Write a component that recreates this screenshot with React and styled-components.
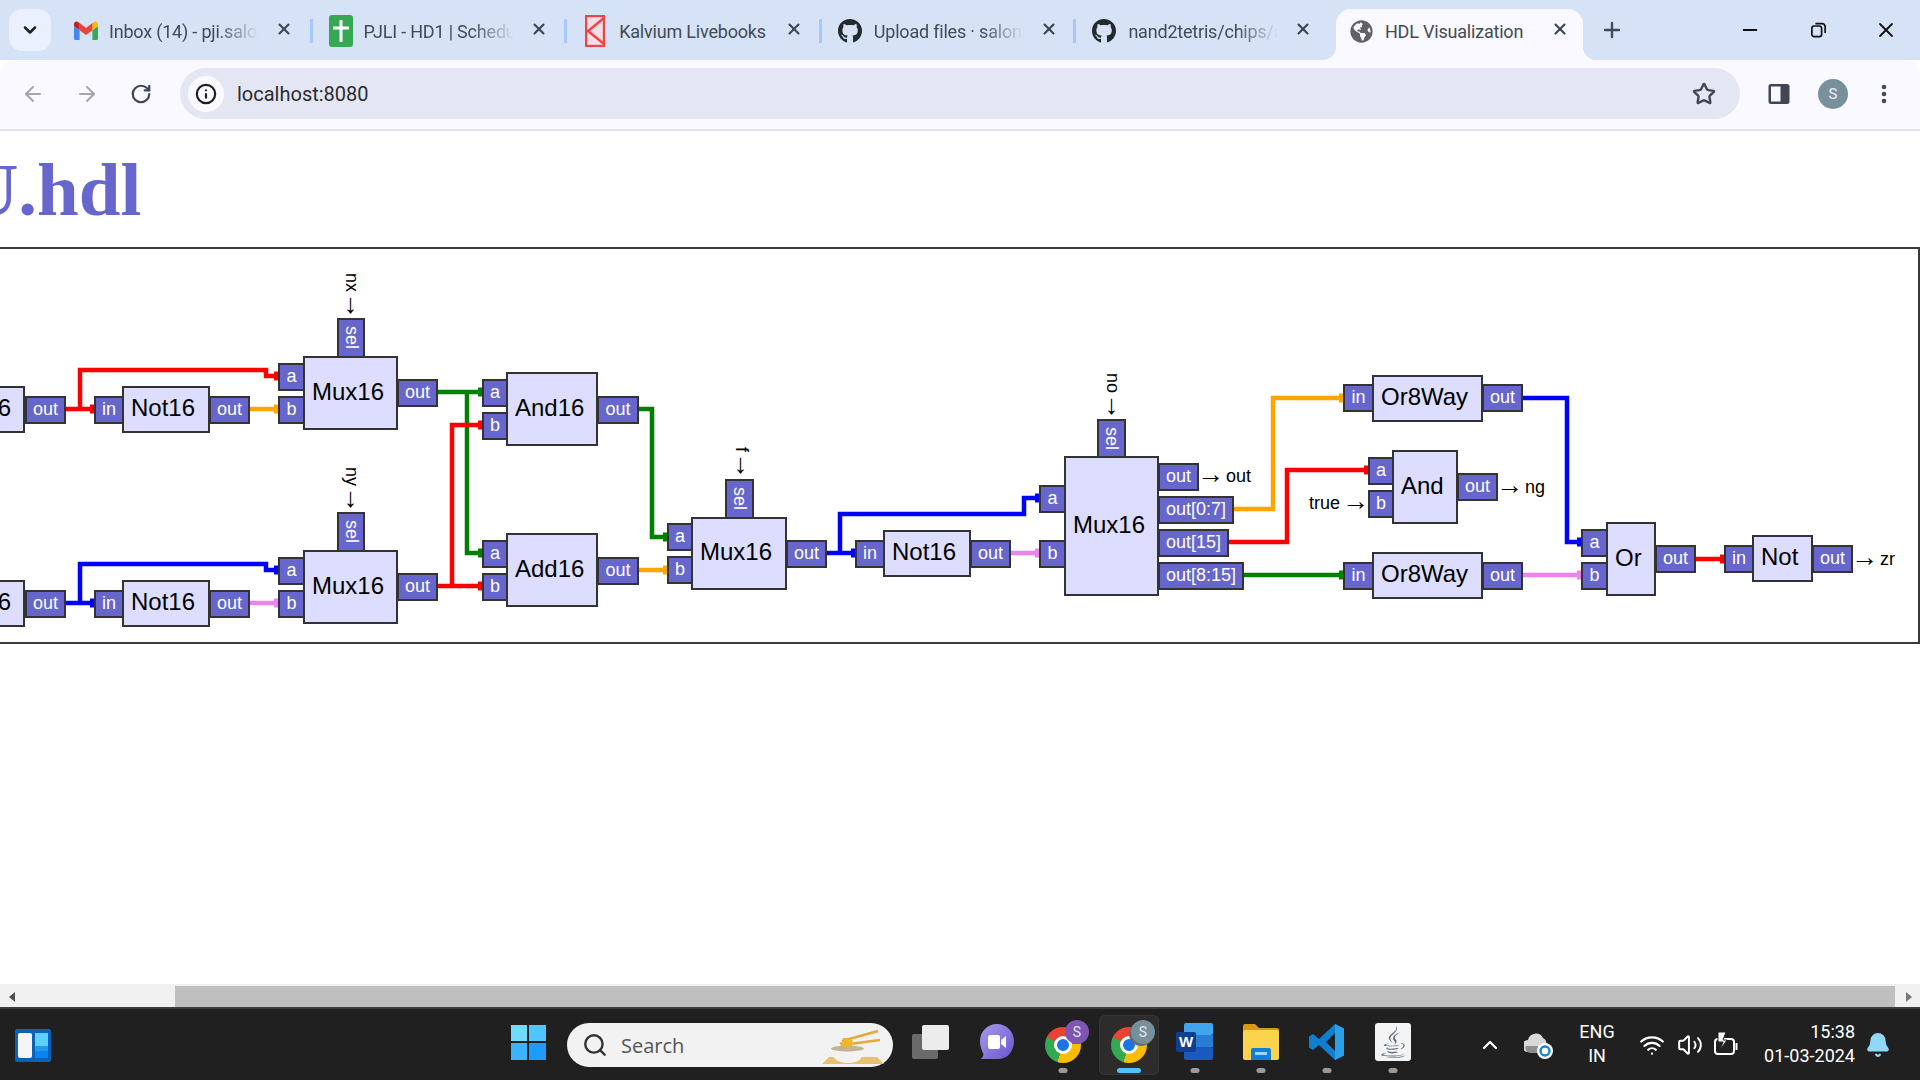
import React from "react";
import styled, { createGlobalStyle } from "styled-components";
import { ArrowLeft, ArrowRight, RotateCw, Star, X, Plus, Minus, ChevronDown, ChevronUp, Search, Wifi, Volume2, Bell, Info, EllipsisVertical } from "lucide-react";
import { FaGithub, FaGlobeAmericas, FaJava } from "react-icons/fa";

const GlobalStyle = createGlobalStyle`
  html, body { margin: 0; padding: 0; height: 100%; overflow: hidden; background: #fff; }
  #root { height: 100%; }
  * { box-sizing: border-box; }
`;

const Screen = styled.div`
  width: 1920px; height: 1080px; display: flex; flex-direction: column;
  font-family: Roboto, "Liberation Sans", sans-serif; overflow: hidden;
`;

/* ---------- browser chrome ---------- */
const TabStrip = styled.div`
  height: 60px; flex: none; background: #d6e3f7; display: flex; align-items: stretch; padding-left: 9px;
`;
const TabSearch = styled.div`
  width: 42px; height: 42px; margin-top: 9px; margin-right: 6px; border-radius: 13px; background: #ebf0fe;
  display: flex; align-items: center; justify-content: center; color: #1f1f1f;
`;
const Tab = styled.div`
  position: relative; width: 254.6px; flex: none; display: flex; align-items: center; height: 60px;
  padding-left: ${p => (p.$active ? 20 : 17)}px; padding-top: 2px; color: #444a55; z-index: ${p => (p.$active ? 1 : 0)};
  ${p => !p.$active && !p.$last && `
    &::after { content: ""; position: absolute; right: -1px; top: 19px; width: 3px; height: 24px; background: #a8c7fa; }
  `}
`;
const ActiveShape = styled.div`
  position: absolute; left: 6px; right: 2px; top: 9px; bottom: 0; background: #f9f9ff; border-radius: 15px 15px 0 0; z-index: -1;
  &::before, &::after { content: ""; position: absolute; bottom: 0; width: 14px; height: 14px; }
  &::before { left: -14px; background: radial-gradient(circle at 0 0, transparent 14px, #f9f9ff 14.5px); }
  &::after { right: -14px; background: radial-gradient(circle at 100% 0, transparent 14px, #f9f9ff 14.5px); }
`;
const TabIcon = styled.div`
  width: 24px; height: 24px; flex: none; display: flex; align-items: center; justify-content: center; margin-right: 11px;
`;
const TabTitle = styled.div`
  width: 150px; flex: none; font-size: 18px; letter-spacing: -0.2px; white-space: nowrap; overflow: hidden; margin-right: 16px; margin-left: ${p => p.$nudge || 0}px;
  ${p => p.$fade && `mask-image: linear-gradient(to right, #000 72%, transparent 100%);`}
`;
const TabClose = styled.div`
  width: 18px; height: 18px; display: flex; align-items: center; justify-content: center; color: #3f4654; margin-top: -4px;
`;
const NewTab = styled.div`
  width: 24px; height: 24px; margin-left: 15px; margin-top: 18px; color: #444a55;
`;
const WindowControls = styled.div`
  margin-left: auto; display: flex; align-items: center; height: 60px; padding-bottom: 0; color: #111; 
`;
const WindowButton = styled.div`
  width: 68px; display: flex; align-items: center; justify-content: center;
`;
const RestoreIcon = () => (
  <svg width="15" height="16" viewBox="0 0 17 17" fill="none" stroke="#111" strokeWidth="1.9">
    <rect x="1" y="4" width="11" height="12" rx="2.5" />
    <path d="M5 1.2h7.5a3.5 3.5 0 0 1 3.5 3.5V12" />
  </svg>
);

const Toolbar = styled.div`
  height: 71px; flex: none; background: #f9f9ff; border-bottom: 2px solid #e1e4ed; display: flex; align-items: center;
  border-radius: 14px 14px 0 0; margin-top: 0; padding: 0 0 2px 5px; position: relative;
`;
const ToolButton = styled.div`
  width: ${p => p.$w || 44}px; flex: none; display: flex; align-items: center; justify-content: center;
  color: ${p => p.$muted ? "#a4a6ab" : "#3f4654"};
`;
const Omnibox = styled.div`
  width: 1560px; flex: none; height: 51px; margin-left: 12px; border-radius: 26px; background: #e4e7f3; display: flex; align-items: center; padding-left: 8px;
`;
const InfoBubble = styled.div`
  width: 36px; height: 36px; border-radius: 50%; background: #f9f9ff; display: flex; align-items: center; justify-content: center; color: #1f1f1f;
`;
const Url = styled.div`
  font-size: 20px; color: #2a2b30; margin-left: 13px;
`;
const StarSlot = styled.div`
  margin-left: auto; margin-right: 24px; color: #3f4654; display: flex;
`;
const Avatar = styled.div`
  width: 30px; height: 30px; border-radius: 50%; background: #78909c; color: #eef; font-size: 15px; flex: none;
  display: flex; align-items: center; justify-content: center;
`;
const SidePanelIcon = () => (
  <svg width="22" height="22" viewBox="0 0 22 22">
    <rect x="0.5" y="1" width="21" height="20" rx="2.5" fill="#3f4654" />
    <rect x="3" y="3.5" width="9.5" height="15" fill="#f9f9ff" />
  </svg>
);

/* ---------- page ---------- */
const Page = styled.div`
  flex: 1; min-height: 0; background: #fff; overflow: hidden;
`;
const PageInner = styled.div`
  width: 2097px; margin-left: -177px;
`;
const Title = styled.h1`
  margin: 0; padding-left: 37px; height: 116px; padding-top: 21px; font: bold 75px/1 "Liberation Serif", serif; color: #6666cc;
`;
const Panel = styled.div`
  margin-left: 8px; height: 397px; border: 2px solid #3a3a3a; position: relative;
`;
const Canvas = styled.div`
  position: absolute; left: 167px; top: -1px; width: 1920px; height: 396px; font-family: "Liberation Sans", Arial, sans-serif;
`;
const Wires = styled.svg`
  position: absolute; left: 0; top: 0; overflow: visible;
`;
const Body = styled.div`
  position: absolute; left: ${p => p.$x}px; top: ${p => p.$y}px; width: ${p => p.$w}px; height: ${p => p.$h}px;
  background: #ddddff; border: 2px solid #333; display: flex; align-items: center; padding: 0 0 3px 7px;
  font-size: 24px; color: #000; white-space: nowrap;
`;
const Port = styled.div`
  position: absolute; left: ${p => p.$x}px; top: ${p => p.$y}px; width: ${p => p.$w}px; height: ${p => p.$h}px;
  background: #6666cc; border: 2px solid #333; display: flex; align-items: center; justify-content: center;
  font-size: 18px; color: #fff; white-space: nowrap; padding-bottom: 1px;
  ${p => p.$v && `writing-mode: vertical-rl; padding-bottom: 0;`}
`;
const PinLabel = styled.div`
  position: absolute; left: ${p => p.$x}px; top: ${p => p.$y}px; font-size: 18px; line-height: 20px; color: #000; white-space: pre;
  ${p => p.$v && `writing-mode: vertical-rl;`}
`;
const Arrow = styled.span`
  display: inline-block; font-size: 27px; line-height: 0; margin: 0 -3px; vertical-align: -1px;
  ${p => p.$v && `transform: translate(4px, -5px);`}
`;

const T = 248;
const P = (x, y, w, h, label, v) => ({ x, y: y - T, w, h, label, v });
const ports = [
  P(25,396,41,28,"out"),
  P(94,396,30,28,"in"), P(209,396,41,28,"out"),
  P(278,363,27,28,"a"), P(278,396,27,28,"b"), P(337,318,28,40,"sel",1), P(397,379,41,28,"out"),
  P(25,590,41,28,"out"),
  P(94,590,30,28,"in"), P(209,590,41,28,"out"),
  P(278,557,27,28,"a"), P(278,590,27,28,"b"), P(337,512,28,40,"sel",1), P(397,573,41,28,"out"),
  P(482,379,26,28,"a"), P(482,412,26,28,"b"), P(597,396,42,28,"out"),
  P(482,540,26,28,"a"), P(482,573,26,28,"b"), P(597,557,42,28,"out"),
  P(667,523,26,28,"a"), P(667,556,26,28,"b"), P(725,479,29,40,"sel",1), P(786,540,41,28,"out"),
  P(855,540,30,28,"in"), P(970,540,41,28,"out"),
  P(1039,485,27,28,"a"), P(1039,540,27,28,"b"), P(1097,419,29,39,"sel",1),
  P(1158,463,41,28,"out"), P(1158,496,76,28,"out[0:7]"), P(1158,529,71,28,"out[15]"), P(1158,562,86,28,"out[8:15]"),
  P(1343,384,31,28,"in"), P(1482,384,41,28,"out"),
  P(1343,562,31,28,"in"), P(1482,562,41,28,"out"),
  P(1368,457,26,28,"a"), P(1368,490,26,28,"b"), P(1457,473,41,28,"out"),
  P(1581,529,27,28,"a"), P(1581,562,27,28,"b"), P(1655,545,41,28,"out"),
  P(1724,545,30,28,"in"), P(1812,545,41,28,"out"),
];
const bodies = [
  P(-62,386,87,47,"Not16"), P(122,386,88,47,"Not16"), P(303,356,95,74,"Mux16"),
  P(-62,580,87,47,"Not16"), P(122,580,88,47,"Not16"), P(303,550,95,74,"Mux16"),
  P(506,372,92,74,"And16"), P(506,533,92,74,"Add16"), P(691,517,96,73,"Mux16"),
  P(883,530,88,47,"Not16"), P(1064,456,95,140,"Mux16"),
  P(1372,375,111,47,"Or8Way"), P(1372,552,111,47,"Or8Way"), P(1392,450,66,74,"And"),
  P(1606,522,50,74,"Or"), P(1752,535,61,47,"Not"),
];
const pinLabels = [
  { x: 1200, y: 466, parts: ["→", " out"] }, { x: 1499, y: 477, parts: ["→", " ng"] },
  { x: 1309, y: 493, parts: ["true ", "→"] }, { x: 1854, y: 549, parts: ["→", " zr"] },
  { x: 342, y: 273, parts: ["nx ", "→"], v: 1 }, { x: 342, y: 467, parts: ["ny ", "→"], v: 1 },
  { x: 732, y: 447, parts: ["f ", "→"], v: 1 }, { x: 1103, y: 373, parts: ["no ", "→"], v: 1 },
];
const wires = [
  ["#ff0000", "66,409 94,409"], ["#ff0000", "80,409 80,370 266,370 266,376 278,376"], ["#ffa500", "250,409 278,409"],
  ["#0000ff", "66,603 94,603"], ["#0000ff", "80,603 80,564 266,564 266,570 278,570"], ["#ee82ee", "250,603 278,603"],
  ["#008000", "438,392 482,392"], ["#008000", "467,392 467,553 482,553"],
  ["#ff0000", "438,586 482,586"], ["#ff0000", "452,586 452,425 482,425"],
  ["#008000", "639,409 652,409 652,537 667,537"], ["#ffa500", "639,570 667,570"],
  ["#0000ff", "827,553 855,553"], ["#0000ff", "840,553 840,514 1024,514 1024,498 1039,498"], ["#ee82ee", "1011,553 1039,553"],
  ["#ffa500", "1234,509 1273,509 1273,398 1343,398"], ["#ff0000", "1229,542 1287,542 1287,470 1368,470"], ["#008000", "1244,575 1343,575"],
  ["#0000ff", "1523,398 1567,398 1567,542 1581,542"], ["#ee82ee", "1523,575 1581,575"], ["#ff0000", "1696,559 1724,559"],
];

function Diagram() {
  return (
    <Canvas>
      <Wires width="1920" height="396" viewBox={`0 ${T} 1920 396`}>
        {wires.map(([c, pts], i) => {
          const end = pts.split(" ").pop().split(",").map(Number);
          return (
            <g key={i}>
              <polyline points={pts} fill="none" stroke={c} strokeWidth="4.5" />
              <rect x={end[0] - 4} y={end[1] - 4.5} width="4" height="9" fill={c} />
            </g>
          );
        })}
      </Wires>
      {ports.map((p, i) => <Port key={i} $x={p.x} $y={p.y} $w={p.w} $h={p.h} $v={p.v}>{p.label}</Port>)}
      {bodies.map((b, i) => <Body key={i} $x={b.x} $y={b.y} $w={b.w} $h={b.h}>{b.label}</Body>)}
      {pinLabels.map((l, i) => (
        <PinLabel key={i} $x={l.x} $y={l.y - T} $v={l.v}>
          {l.parts.map((t, j) => t === "→" ? <Arrow key={j} $v={l.v}>→</Arrow> : <span key={j}>{t}</span>)}
        </PinLabel>
      ))}
    </Canvas>
  );
}

/* ---------- scrollbar ---------- */
const ScrollBar = styled.div`
  height: 23px; flex: none; background: #f1f1f1; display: flex; align-items: center; padding-top: 2px;
`;
const ScrollArrow = styled.div`
  width: 0; height: 0; border-top: 5px solid transparent; border-bottom: 5px solid transparent;
  ${p => p.$right ? "border-left: 6px solid #777; margin-left: 11px;" : "border-right: 6px solid #505050; margin-left: 9px;"}
`;
const ScrollThumb = styled.div`
  width: 1720px; height: 21px; background: #bfbfbf; margin-left: 160px;
`;

/* ---------- taskbar ---------- */
const Taskbar = styled.div`
  height: 73px; flex: none; background: #202020; border-top: 2px solid #3c3c3c; display: flex; align-items: center; color: #fff; padding-top: 1px;
`;
const WidgetIcon = styled.div`
  width: 36px; height: 33px; margin-left: 15px; background: #0a62b8; border-radius: 2px; display: flex; gap: 3px; padding: 4px 3px; flex: none;
`;
const WidgetPaneWhite = styled.div`
  width: 14px; background: #f5f5f5; border-radius: 2px;
`;
const WidgetPaneBlue = styled.div`
  flex: 1; background: linear-gradient(#60d0ff 0 50%, #1e9bf0 50% 72%, #0a84f0 72%);
`;
const Center = styled.div`
  margin-left: 444px; display: flex; align-items: center; flex: none;
`;
const Slot = styled.div`
  position: relative; width: 66px; height: 60px; flex: none; display: flex; align-items: center; justify-content: center;
  border-radius: 6px; padding-bottom: 6px;
  ${p => p.$active && `background: #2e2b2b; box-shadow: inset 0 0 0 1px #363636; margin: 0 3px; width: 60px;`}
`;
const RunDot = styled.div`
  position: absolute; left: 50%; bottom: 2px; transform: translateX(-50%); border-radius: 3px; height: 5px;
  width: ${p => p.$active ? 24 : 9}px; background: ${p => p.$active ? "#4cc2ff" : "#9a9a9a"};
`;
const StartLogo = styled.div`
  width: 35px; height: 35px; display: grid; grid-template: 1fr 1fr / 1fr 1fr; gap: 2px;
`;
const StartPane = styled.div`
  background: ${p => p.$c};
`;
const SearchPill = styled.div`
  width: 326px; height: 44px; margin: 0 5px 0 6px; border-radius: 22px; background: #f2f2f2; display: flex; align-items: center;
  padding-left: 15px; position: relative; flex: none; color: #333;
`;
const SearchText = styled.div`
  font-size: 20px; color: #555; margin-left: 13px; font-family: "Open Sans", sans-serif;
`;
const Noodle = styled.div`
  position: absolute; right: 7px; top: 1px;
`;
const ChromeBall = styled.div`
  width: 36px; height: 36px; border-radius: 50%; position: relative;
  background: conic-gradient(#ea4335 0deg 85deg, #fbbc04 85deg 198deg, #34a853 198deg 295deg, #ea4335 295deg);
  margin-top: 6px;
  &::after { content: ""; position: absolute; inset: 9px; border-radius: 50%; background: #1a73e8; border: 3px solid #fff; }
`;
const Badge = styled.div`
  position: absolute; right: ${p => p.$r}px; top: 5px; width: 24px; height: 24px; border-radius: 50%; background: ${p => p.$c};
  display: flex; align-items: center; justify-content: center; font-size: 14px; color: #e6e6f0; z-index: 1;
  ${p => p.$ghost && `box-shadow: -2px 2px 0 #5c6d76;`}
`;
const Tray = styled.div`
  margin-left: auto; display: flex; align-items: center; padding-right: 19px; flex: none;
`;
const TrayItem = styled.div`
  width: ${p => p.$w}px; flex: none; display: flex; align-items: center; justify-content: center; color: #fff;
`;
const Lang = styled.div`
  width: 68px; flex: none; text-align: center; font-size: 18px; line-height: 24px; color: #fff; margin-top: -2px;
`;
const Clock = styled.div`
  width: 110px; flex: none; text-align: right; font-size: 18px; line-height: 24px; color: #fff; margin-top: -2px;
`;

const GmailIcon = () => (
  <svg width="24" height="20" viewBox="0 0 24 18">
    <path d="M1.6 18h4V8.3L0 4v12.4C0 17.3.7 18 1.6 18z" fill="#4285f4" />
    <path d="M18.4 18h4c.9 0 1.6-.7 1.6-1.6V4l-5.6 4.3z" fill="#34a853" />
    <path d="M18.4 1v7.3L24 4V2c0-2-2.3-3.1-3.8-1.9z" fill="#fbbc04" />
    <path d="M5.6 8.3V1L12 6l6.4-5v7.3L12 13z" fill="#ea4335" />
    <path d="M0 2v2l5.6 4.3V1L3.8.1C2.3-1.1 0 0 0 2z" fill="#c5221f" />
  </svg>
);
const SheetIcon = () => (
  <svg width="24" height="32" viewBox="0 0 24 32">
    <rect width="24" height="32" rx="3" fill="#34a853" />
    <path d="M12 5v22M4 13h16" stroke="#fff" strokeWidth="3" />
  </svg>
);
const KalviumIcon = () => (
  <svg width="20" height="32" viewBox="0 0 20 32" fill="#f2dfe6" stroke="#f44147" strokeWidth="2.4">
    <rect x="1" y="1" width="18" height="30" />
    <path d="M19 3L3 16l16 13" fill="none" />
  </svg>
);
const MeetIcon = () => (
  <svg width="36" height="38" viewBox="0 0 36 38">
    <defs><linearGradient id="mt" x1="0" y1="0" x2="1" y2="1"><stop offset="0" stopColor="#a99bf2" /><stop offset="1" stopColor="#6a55c8" /></linearGradient></defs>
    <path d="M18 1c10 0 17 8 17 17 0 10-6 18-16 18H2c2-2 3-4 2-6C2 26 1 22 1 18 1 9 8 1 18 1z" fill="url(#mt)" />
    <rect x="9" y="12" width="12" height="14" rx="2" fill="#fff" />
    <path d="M22 17l5-4v12l-5-4z" fill="#fff" />
  </svg>
);
const WordIcon = () => (
  <svg width="38" height="38" viewBox="0 0 38 38">
    <rect x="8" y="0" width="29" height="12" rx="2" fill="#41a5ee" />
    <rect x="8" y="12" width="29" height="12" fill="#2b7cd3" />
    <rect x="8" y="24" width="29" height="13" rx="2" fill="#185abd" />
    <rect x="0" y="9" width="20" height="20" rx="2" fill="#103f91" />
    <text x="10" y="24" textAnchor="middle" fontSize="15" fontWeight="700" fill="#fff" fontFamily="Liberation Sans">W</text>
  </svg>
);
const FolderIcon = () => (
  <svg width="36" height="38" viewBox="0 0 36 38">
    <path d="M0 3a2 2 0 0 1 2-2h10l4 4h18a2 2 0 0 1 2 2v4H0z" fill="#d79a12" />
    <rect x="0" y="7" width="36" height="30" rx="2" fill="#fbd34c" />
    <path d="M10 25h16a2 2 0 0 1 2 2v10H8V27a2 2 0 0 1 2-2z" fill="#0f7fd8" />
    <rect x="12" y="29" width="12" height="3" fill="#9ad4ff" />
  </svg>
);
const CodeIcon = () => (
  <svg width="36" height="38" viewBox="0 0 36 38">
    <path d="M26 1l9 4.5v27L26 37 10 22l-6 5-4-2.5V13.5L4 11l6 5zM26 10l-9 9 9 9z" fill="#0f7fd0" fillRule="evenodd" />
    <path d="M26 1l9 4.5v27L26 37z" fill="#2aa0ec" />
  </svg>
);
const JavaTile = styled.div`
  width: 36px; height: 38px; background: #f4f4f4; border-radius: 3px; display: flex; align-items: center; justify-content: center;
`;
const TaskViewIcon = () => (
  <svg width="38" height="34" viewBox="0 0 38 34">
    <rect x="0" y="9" width="26" height="25" rx="2" fill="#6a6a6a" />
    <rect x="10" y="0" width="27" height="25" rx="2" fill="#ececec" />
  </svg>
);
const NoodleIcon = () => (
  <svg width="66" height="44" viewBox="0 0 66 44">
    <path d="M22 17L58 7M22 21l38-5" stroke="#e4a93b" strokeWidth="2.6" />
    <path d="M21 18c1 3 3 5 2 10M26 14c0 6 1 10 1 14M31 16c0 5-1 9-1 12" stroke="#f0b429" strokeWidth="3" fill="none" />
    <path d="M2 40l7-7h48l7 7z" fill="#e6c170" />
    <path d="M11 24h33c0 11-6 15-16 15S11 35 11 24z" fill="#f4f2f0" />
    <ellipse cx="27.5" cy="24.5" rx="16.5" ry="3" fill="#c2b294" />
    <path d="M24 24c1-5 0-8 0-10M28 24c0-4 0-7 0-9" stroke="#f0b429" strokeWidth="2.4" fill="none" />
  </svg>
);
const CloudIcon = () => (
  <svg width="30" height="30" viewBox="0 0 30 30">
    <path d="M4 22a6 6 0 0 1 0-12 8 8 0 0 1 15-2 6 6 0 0 1 3 7z" fill="#d9d9d9" />
    <path d="M2 16a5 5 0 0 0 4 7h8v-7z" fill="#8e8e8e" />
    <circle cx="21" cy="21" r="8" fill="#fff" />
    <circle cx="21" cy="21" r="4.5" fill="none" stroke="#1684d8" strokeWidth="2.4" />
  </svg>
);
const BatteryIcon = () => (
  <svg width="26" height="30" viewBox="0 0 26 30" fill="none" stroke="#fff" strokeWidth="2">
    <rect x="2" y="9" width="19" height="15" rx="3" />
    <path d="M23.5 13v7" />
    <path d="M5 2v10l5 0-3 8 7-10h-4l3-8z" fill="#fff" stroke="#202020" strokeWidth="1" />
  </svg>
);

const tabs = [
  { icon: <GmailIcon />, title: "Inbox (14) - pji.salonee@gmail.com", fade: true },
  { icon: <SheetIcon />, title: "PJLI - HD1 | Schedule", fade: true },
  { icon: <KalviumIcon />, title: "Kalvium Livebooks", fade: false, nudge: 1 },
  { icon: <FaGithub size={26} color="#24292f" />, title: "Upload files · salonee", fade: true, nudge: 1 },
  { icon: <FaGithub size={26} color="#24292f" />, title: "nand2tetris/chips/alu", fade: true, last: true, nudge: 1 },
  { icon: <FaGlobeAmericas size={23} color="#5f6368" />, title: "HDL Visualization", active: true },
];

export default function App() {
  return (
    <Screen>
      <GlobalStyle />
      <TabStrip>
        <TabSearch><ChevronDown size={20} strokeWidth={3} /></TabSearch>
        {tabs.map(t => (
          <Tab key={t.title} $active={t.active} $last={t.last}>
            {t.active && <ActiveShape />}
            <TabIcon>{t.icon}</TabIcon>
            <TabTitle $fade={t.fade} $nudge={t.nudge}>{t.title}</TabTitle>
            <TabClose><X size={18} strokeWidth={2.8} /></TabClose>
          </Tab>
        ))}
        <NewTab><Plus size={24} strokeWidth={2.4} /></NewTab>
        <WindowControls>
          <WindowButton><Minus size={22} strokeWidth={2} /></WindowButton>
          <WindowButton><RestoreIcon /></WindowButton>
          <WindowButton><X size={24} strokeWidth={1.8} /></WindowButton>
        </WindowControls>
      </TabStrip>
      <Toolbar>
        <ToolButton $muted $w={55} ><ArrowLeft size={24} strokeWidth={2} /></ToolButton>
        <ToolButton $muted $w={54}><ArrowRight size={24} strokeWidth={2} /></ToolButton>
        <ToolButton $w={54}><RotateCw size={22} strokeWidth={2.4} /></ToolButton>
        <Omnibox>
          <InfoBubble><Info size={22} strokeWidth={2.4} /></InfoBubble>
          <Url>localhost:8080</Url>
          <StarSlot><Star size={24} strokeWidth={2.4} /></StarSlot>
        </Omnibox>
        <ToolButton $w={78}><SidePanelIcon /></ToolButton>
        <Avatar>S</Avatar>
        <ToolButton $w={72}><EllipsisVertical size={24} strokeWidth={2.6} /></ToolButton>
      </Toolbar>
      <Page>
        <PageInner>
          <Title>ALU.hdl</Title>
          <Panel><Diagram /></Panel>
        </PageInner>
      </Page>
      <ScrollBar>
        <ScrollArrow />
        <ScrollThumb />
        <ScrollArrow $right />
      </ScrollBar>
      <Taskbar>
        <WidgetIcon><WidgetPaneWhite /><WidgetPaneBlue /></WidgetIcon>
        <Center>
          <Slot>
            <StartLogo>
              <StartPane $c="#6fdcff" /><StartPane $c="#4fc6ff" /><StartPane $c="#3bb4ff" /><StartPane $c="#1c9cff" />
            </StartLogo>
          </Slot>
          <SearchPill>
            <Search size={26} strokeWidth={2.2} />
            <SearchText>Search</SearchText>
            <Noodle><NoodleIcon /></Noodle>
          </SearchPill>
          <Slot><TaskViewIcon /></Slot>
          <Slot><MeetIcon /></Slot>
          <Slot><ChromeBall /><Badge $c="#7d55b5" $r={7}>S</Badge><RunDot /></Slot>
          <Slot $active><ChromeBall /><Badge $c="#78909c" $ghost $r={4}>S</Badge><RunDot $active /></Slot>
          <Slot><WordIcon /><RunDot /></Slot>
          <Slot><FolderIcon /><RunDot /></Slot>
          <Slot><CodeIcon /><RunDot /></Slot>
          <Slot><JavaTile><FaJava size={32} color="#5f6f7f" /></JavaTile><RunDot /></Slot>
        </Center>
        <Tray>
          <TrayItem $w={50}><ChevronUp size={24} strokeWidth={2.2} /></TrayItem>
          <TrayItem $w={48}><CloudIcon /></TrayItem>
          <Lang>ENG<br />IN</Lang>
          <TrayItem $w={42}><Wifi size={26} strokeWidth={2} /></TrayItem>
          <TrayItem $w={34}><Volume2 size={26} strokeWidth={1.8} /></TrayItem>
          <TrayItem $w={38}><BatteryIcon /></TrayItem>
          <Clock>15:38<br />01-03-2024</Clock>
          <TrayItem $w={46}><Bell size={26} color="#8fd8f8" fill="#8fd8f8" /></TrayItem>
        </Tray>
      </Taskbar>
    </Screen>
  );
}
